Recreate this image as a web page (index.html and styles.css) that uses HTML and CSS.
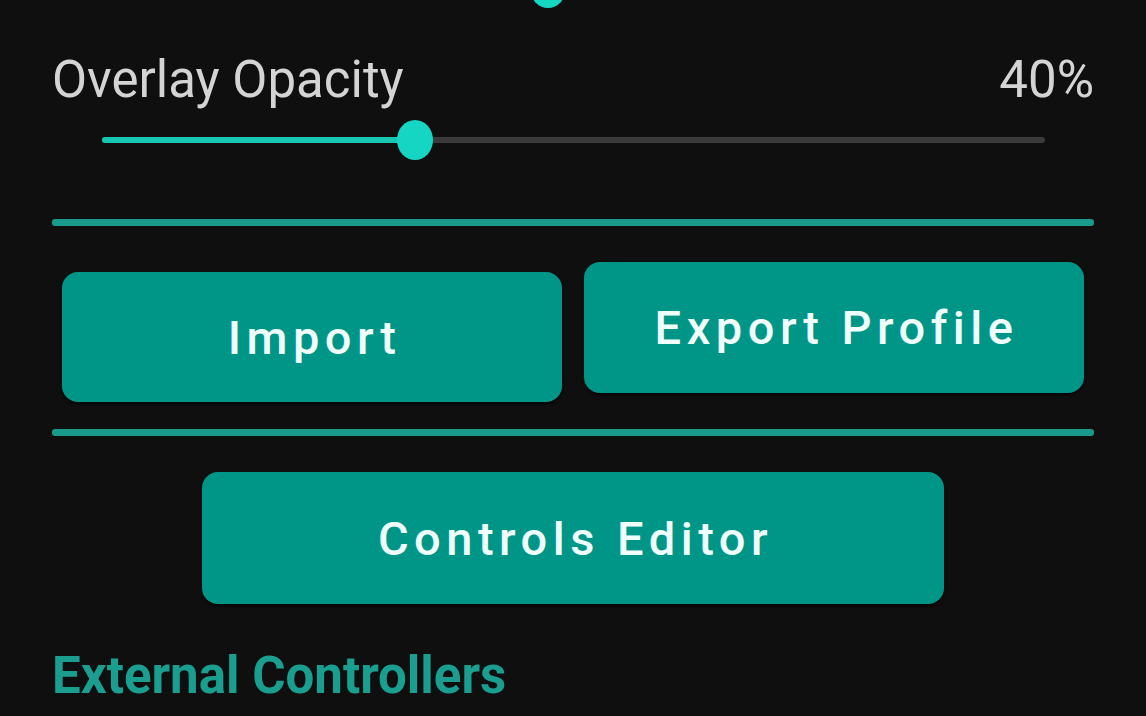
FILE: index.html
```html
<!DOCTYPE html>
<html lang="en">
<head>
    <meta charset="UTF-8">
    <meta name="viewport" content="width=device-width, initial-scale=1.0">
    <title>Controls Settings</title>
    <link rel="stylesheet" href="styles.css">
</head>
<body>

  <main class="settings">

    <!-- tail end of the slider above (scrolled off) -->
    <div class="slider slider-prev">
      <div class="slider-track"><div class="slider-fill" style="width: 47.3%;"></div></div>
      <span class="slider-thumb" style="left: 47.3%;"></span>
    </div>

    <div class="setting-row">
      <span class="setting-label">Overlay Opacity</span>
      <span class="setting-value">40%</span>
    </div>
    <div class="slider">
      <div class="slider-track"><div class="slider-fill" style="width: 33.2%;"></div></div>
      <span class="slider-thumb" style="left: 33.2%;"></span>
    </div>

    <hr class="divider divider-top">

    <div class="btn-row">
      <button class="btn btn-import">Import</button>
      <button class="btn btn-export">Export Profile</button>
    </div>

    <hr class="divider divider-mid">

    <button class="btn btn-editor">Controls Editor</button>

    <h2 class="section-title">External Controllers</h2>

  </main>

</body>
</html>
```

FILE: styles.css
```css
body {
  margin: 0;
  background-color: #0f0f0f;
  overflow: hidden;
  font-family: Roboto, "Noto Sans", sans-serif;
}

.settings {
  padding: 0 52px;
}

/* sliders */
.slider {
  position: relative;
  height: 40px;
  margin: 10px 49px 0 50px;
}

.slider-prev {
  margin-top: -32px;
}

.slider-track {
  position: absolute;
  left: 0;
  right: 0;
  top: 17px;
  height: 6px;
  background-color: #3b3b3b;
  border-radius: 3px;
}

.slider-fill {
  height: 100%;
  background-color: #19c6b3;
  border-radius: 3px;
}

.slider-thumb {
  position: absolute;
  top: 0;
  width: 36px;
  height: 40px;
  margin-left: -18px;
  border-radius: 50%;
  background-color: #14d6c2;
}

.setting-row {
  display: flex;
  justify-content: space-between;
  margin-top: 42px;
  font-size: 51px;
  line-height: 60px;
  color: #d4d4d4;
}

/* dividers */
.divider {
  border: none;
  height: 7px;
  margin: 0;
  background-color: #1a9a8b;
  border-radius: 3px;
}

.divider-top {
  margin-top: 59px;
}

.divider-mid {
  margin-top: 27px;
}

/* buttons */
.btn-row {
  display: flex;
  align-items: flex-start;
  gap: 22px;
  margin: 36px 10px 0 10px;
}

.btn {
  display: flex;
  align-items: center;
  justify-content: center;
  border: none;
  border-radius: 16px;
  background-color: #009687;
  color: #f0fffc;
  font-family: Roboto, "Noto Sans", sans-serif;
  font-size: 47px;
  font-weight: 500;
  letter-spacing: 5.5px;
  padding: 0 0 0 5px;
  box-shadow: 0 2px 3px rgba(0, 0, 0, 0.6);
}

.btn-import {
  flex: 1;
  height: 130px;
  margin-top: 10px;
}

.btn-export {
  flex: 1;
  height: 131px;
}

.btn-editor {
  width: 742px;
  height: 132px;
  margin: 36px auto 0 auto;
}

.section-title {
  margin: 42px 0 0 0;
  font-size: 51px;
  font-weight: 700;
  line-height: 60px;
  color: #1a9e8f;
}
```
